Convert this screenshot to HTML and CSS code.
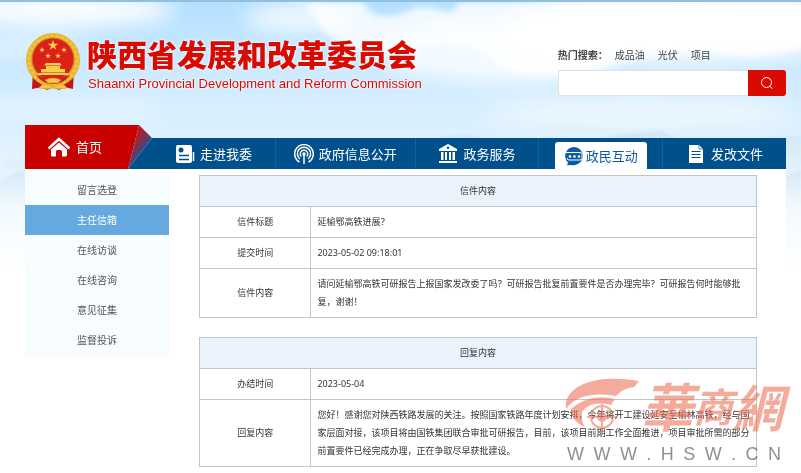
FILE: index.html
```html
<!DOCTYPE html>
<html lang="zh-CN">
<head>
<meta charset="utf-8">
<meta name="viewport" content="width=device-width, initial-scale=1">
<title>陕西省发展和改革委员会</title>
<link rel="stylesheet" href="styles.css">
</head>
<body>
<svg class="sky" viewBox="0 0 801 280" preserveAspectRatio="none" aria-hidden="true">
  <defs>
    <linearGradient id="air" x1="0" y1="0" x2="0" y2="1">
      <stop offset="0" stop-color="#b4e0ff"/><stop offset=".25" stop-color="#cdeaff"/><stop offset=".5" stop-color="#dff2fe"/><stop offset=".75" stop-color="#f4faff"/><stop offset=".95" stop-color="#fff"/>
    </linearGradient>
    <linearGradient id="hill" x1="0" y1="0" x2="0" y2="1">
      <stop offset="0" stop-color="#bfdcf1" stop-opacity=".5"/><stop offset="1" stop-color="#fff" stop-opacity="0"/>
    </linearGradient>
    <filter id="soft" x="-30%" y="-50%" width="160%" height="200%"><feGaussianBlur stdDeviation="10"/></filter>
    <filter id="edge" x="-10%" y="-20%" width="120%" height="140%"><feGaussianBlur stdDeviation="3"/></filter>
    <filter id="mist" x="-10%" y="-20%" width="120%" height="140%"><feGaussianBlur stdDeviation="1"/></filter>
  </defs>
  <rect width="801" height="280" fill="url(#air)"/>
  <g fill="#fff" filter="url(#soft)">
    <ellipse cx="60" cy="8" rx="115" ry="17" opacity=".95"/>
    <ellipse cx="20" cy="45" rx="70" ry="10" opacity=".5"/>
    <ellipse cx="300" cy="16" rx="55" ry="14" opacity=".8"/>
    <ellipse cx="60" cy="106" rx="110" ry="8" opacity=".5"/>
    <ellipse cx="500" cy="50" rx="120" ry="30" opacity=".8"/>
    <ellipse cx="690" cy="25" rx="190" ry="34" opacity=".95"/>
    <ellipse cx="640" cy="110" rx="160" ry="16" opacity=".5"/>
  </g>
  <path filter="url(#edge)" fill="#fff" opacity=".8" d="M290 0h74q6 14 20 14t26-6 30 0 16-8h360v40q-50 20-90 12t-120 14-110-6-90-12-90-30-26-18z"/>
  <g filter="url(#mist)">
    <path fill="url(#hill)" d="M0 162l10-6 14 3 22-14 26-8 30 6 26 5 36-3 30-7 25 6 26-2 20-6 20 8 60 4 60-3 35-10 25-3 30 6 45 5 40-2 35-8 45-4 30 12 25 4 35-9 51-2v90H0z"/>
    <path fill="url(#hill)" d="M0 178l18-8 20 2 30-8h660l30 6 22 6 21-8v60H0z"/>
  </g>
</svg>

<div class="page">
  <header class="masthead">
    <a class="brand" href="#">
      <svg class="emblem" viewBox="0 0 56 60" aria-hidden="true">
        <path d="M8 38L7 57l10-2 5 3 6-3 6 3 5-3 9 2 1-19z" fill="#c41418"/>
        <circle cx="28" cy="28" r="27" fill="#e9b52f"/>
        <circle cx="28" cy="28" r="24" fill="none" stroke="#f0c548" stroke-width="3" stroke-dasharray="3 2"/>
        <circle cx="28" cy="27" r="21" fill="#dc2119" stroke="#b98a20"/>
        <path d="M28 8l1.300 3.700h4L30 14l1.200 3.800L28 15.500l-3.200 2.300L26 14l-3.300-2.300h4z" fill="#f8cf4b"/>
        <g fill="#f8cf4b">
          <path d="M17 15l.8 2h2l-1.600 1.300.6 2-1.800-1.200-1.800 1.200.6-2-1.600-1.300h2zM39 15l.8 2h2l-1.600 1.300.6 2-1.800-1.200-1.800 1.200.6-2-1.600-1.300h2zM23 21l.8 2h2l-1.600 1.300.6 2-1.800-1.200-1.800 1.200.6-2-1.600-1.300h2zM33 21l.8 2h2l-1.600 1.300.6 2-1.800-1.200-1.800 1.200.6-2-1.600-1.300h2z"/>
          <path d="M21 31h14l2 2.500H19zM21 34h14v3H21zM16 37h24v3.500H16zM13 41h30v2H13z"/>
        </g>
        <path d="M11 43q17 6 34 0-6 9-17 9t-17-9z" fill="#d41f1a"/>
        <path d="M20 48q8-4 16 0l-3 3H23zM14 56q4-6 10-3l4 2 4-2q6-3 10 3l-8 1-6-1-6 1z" fill="#f3c544" stroke="#d39a1f" stroke-width=".6"/>
      </svg>
      <span class="names">
        <strong class="name-zh">陕西省发展和改革委员会</strong>
        <span class="name-en">Shaanxi Provincial Development and Reform Commission</span>
      </span>
    </a>
    <form class="search" role="search">
      <div class="hot"><b>热门搜索：</b><a href="#">成品油</a><a href="#">光伏</a><a href="#">项目</a></div>
      <div class="field">
        <input type="search" aria-label="搜索">
        <button type="button" aria-label="搜索">
          <svg viewBox="0 0 14 14" aria-hidden="true"><circle cx="6.500" cy="6.500" r="5" /><path d="M10 10.500l2.500 2"/></svg>
        </button>
      </div>
    </form>
  </header>

  <nav class="mainnav">
    <a class="home" href="#">
      <svg class="home-icon" viewBox="0 0 24 20" aria-hidden="true"><path d="M1.500 11.500L12 2l10.500 9.500" fill="none" stroke="#fff" stroke-width="2.600"/><path d="M4 12.500l8-7 8 7V18q0 1.500-1.500 1.500H15v-5q0-1.500-1.500-1.500h-3Q9 13 9 14.500v5H5.500Q4 19.500 4 18z" fill="#fff"/></svg>
      首页
    </a>
    <svg class="fold" viewBox="0 0 24 44" aria-hidden="true">
      <defs><linearGradient id="foldfill" gradientUnits="userSpaceOnUse" x1="6" y1="14" x2="18" y2="24"><stop offset="0" stop-color="#b81c2a"/><stop offset="1" stop-color="#2c4f88"/></linearGradient></defs>
      <path d="M0 0h11L0 44z" fill="#c90000"/><path d="M24 13v31H0z" fill="#00508c"/><path d="M11 0l13 13L0 44z" fill="url(#foldfill)"/>
    </svg>
    <ul class="tabs">
      <li><a href="#"><svg viewBox="0 0 20 20" aria-hidden="true"><rect x="1" y="1" width="16" height="18" rx="2" fill="#fff"/><path d="M18.500 8v9" stroke="#fff" stroke-width="1.500"/><circle cx="6" cy="6" r="2.500" fill="#00508c"/><path d="M4 11.500h10M4 15.500h10" stroke="#00508c" stroke-width="1.500"/></svg>走进我委</a></li>
      <li class="wide"><a href="#"><svg viewBox="0 0 20 20" aria-hidden="true"><g fill="none" stroke="#fff" stroke-width="1.500"><path d="M5.500 18a9.300 9.300 0 1 1 9 0"/><path d="M6 15a6.600 6.600 0 1 1 8 0"/><path d="M7.300 12.500a3.700 3.700 0 1 1 5.400 0"/><path d="M10 10v10"/></g><circle cx="10" cy="10" r="1.700" fill="#fff"/></svg>政府信息公开</a></li>
      <li><a href="#"><svg viewBox="0 0 20 20" aria-hidden="true"><path fill="#fff" fill-rule="evenodd" d="M10 0l9 5v2H1V5zM10 2.500a1.300 1.300 0 1 0 0 2.600 1.300 1.300 0 0 0 0-2.600zM3 8h2.500v8H3zM7 8h2v8H7zM11 8h2v8h-2zM14.500 8H17v8h-2.500zM1 17h18v2H1z"/></svg>政务服务</a></li>
      <li><a class="current" href="#"><svg viewBox="0 0 20 20" aria-hidden="true"><path fill="#0c5bab" d="M10 1a9 9 0 0 1 4 17q-4 2-8 1l-3 .5 1-3A9 9 0 0 1 10 1z"/><path d="M2 6.500h14q2 0 2 2V12q0 2-2 2H5q-2 0-2-2" fill="none" stroke="#fff"/><g fill="#fff"><circle cx="6" cy="10.500" r="1.300"/><circle cx="10.500" cy="10.500" r="1.300"/><circle cx="15" cy="10.500" r="1.300"/></g></svg>政民互动</a></li>
      <li><a href="#"><svg viewBox="0 0 20 20" aria-hidden="true"><path d="M3 1h10l4 4v14H3z" fill="#fff"/><path d="M13 1v4h4" fill="none" stroke="#00508c" stroke-width=".7"/><path d="M5.500 7.500h9M5.500 10.500h9M5.500 13.500h9" stroke="#00508c"/></svg>发改文件</a></li>
    </ul>
  </nav>

  <div class="body">
    <aside>
      <ul class="side">
        <li><a href="#">留言选登</a></li>
        <li><a class="active" href="#">主任信箱</a></li>
        <li><a href="#">在线访谈</a></li>
        <li><a href="#">在线咨询</a></li>
        <li><a href="#">意见征集</a></li>
        <li><a href="#">监督投诉</a></li>
      </ul>
    </aside>
    <main>
      <table>
        <colgroup><col class="label"><col></colgroup>
        <thead><tr><th colspan="2">信件内容</th></tr></thead>
        <tbody>
          <tr><th scope="row">信件标题</th><td>延榆鄂高铁进展？</td></tr>
          <tr><th scope="row">提交时间</th><td>2023-05-02 09:18:01</td></tr>
          <tr><th scope="row">信件内容</th><td>请问延榆鄂高铁可研报告上报国家发改委了吗？可研报告批复前置要件是否办理完毕？可研报告何时能够批<br>复，谢谢！</td></tr>
        </tbody>
      </table>
      <div class="reply">
        <table>
          <colgroup><col class="label"><col></colgroup>
          <thead><tr><th colspan="2">回复内容</th></tr></thead>
          <tbody>
            <tr><th scope="row">办结时间</th><td>2023-05-04</td></tr>
            <tr><th scope="row">回复内容</th><td>您好！感谢您对陕西铁路发展的关注。按照国家铁路年度计划安排，今年将开工建设延安至榆林高铁，经与国家层面对接，该项目将由国铁集团联合审批可研报告，目前，该项目前期工作全面推进，项目审批所需的部分前置要件已经完成办理，正在争取尽早获批建设。</td></tr>
          </tbody>
        </table>
        <div class="watermark">
          <div class="mark">
            <svg viewBox="0 0 76 58" aria-hidden="true">
              <path d="M1 33C-2 10 30-3 74 5L69 11Q58 12 51 20Q15 14 1 33z"/>
              <path d="M6 33Q24 17 50 23L46 29Q25 24 17 36Q16 46 20 51Q6 45 6 33z"/>
              <circle cx="37" cy="41" r="11" fill="none" stroke="#f0745a" stroke-width="2"/>
              <circle cx="37" cy="41" r="5"/>
              <path d="M36 28h2v28h-2zM22 40h30v2H22z"/>
            </svg>
            <span class="hua">華</span><span class="shang">商</span><span class="wang">網</span>
          </div>
          <div class="site"><span>W</span><span>W</span><span>W</span><span>.</span><span>H</span><span>S</span><span>W</span><span>.</span><span>C</span><span>N</span></div>
        </div>
      </div>
    </main>
  </div>
</div>
</body>
</html>
```
FILE: styles.css
```css
* { box-sizing: border-box; }

body {
  margin: 0;
  border-top: 2px solid #90bfe2;
  background: #fff;
  color: #333;
  font: 9px/18px "Noto Sans", "Noto Sans CJK SC", sans-serif;
}

a { color: inherit; text-decoration: none; }
ul { list-style: none; margin: 0; padding: 0; }

.sky {
  position: absolute;
  top: 2px;
  left: 0;
  z-index: -1;
  width: 100%;
  height: 280px;
}

.page { margin: 0 15px 0 25px; }

.masthead {
  display: flex;
  justify-content: space-between;
  padding-top: 30px;
  height: 123px;
}

.brand { display: flex; align-items: flex-start; gap: 6px; }
.emblem { width: 56px; height: 60px; }
.names { display: flex; flex-direction: column; gap: 4px; padding-top: 2px; color: #d90b00; white-space: nowrap; }
.name-zh {
  font: 900 30px/38px "Noto Sans CJK SC", sans-serif;
  text-shadow: 0 0 2px #fff, 0 0 3px #fff;
}
.name-en {
  padding-left: 1px;
  font: 13px/16px "Liberation Sans", sans-serif;
  text-shadow: 0 0 2px #fff, 0 0 2px #fff;
}

.search { width: 30%; padding-top: 14px; }
.hot { display: flex; gap: 13px; font-size: 10px; color: #444; }
.hot b { margin-right: -6px; }
.field { display: flex; margin-top: 6px; height: 26px; }
.field input {
  flex: 1;
  min-width: 0;
  border: 1px solid #e2e2e2;
  border-right: 0;
  border-radius: 3px 0 0 3px;
  background: #fff;
  outline: 0;
}
.field button {
  display: flex;
  align-items: center;
  justify-content: center;
  width: 38px;
  padding: 0;
  border: 0;
  border-radius: 0 3px 3px 0;
  background: #d90b00;
}
.field svg { width: 14px; height: 14px; fill: none; stroke: #fff; }

.mainnav { display: flex; align-items: flex-end; height: 44px; font-size: 13px; color: #fff; }
.home {
  display: flex;
  align-items: center;
  gap: 5px;
  width: 103px;
  height: 44px;
  padding-left: 22px;
  background: #c90000;
}
.home-icon { width: 24px; height: 20px; }
.fold { width: 24px; height: 44px; }
.tabs { flex: 1; display: flex; height: 31px; background: #00508c; }
.tabs li {
  flex: 124;
  display: flex;
  justify-content: center;
  align-items: flex-end;
  border-right: 1px solid #0c62a4;
}
.tabs li:last-child { border-right: 0; }
.tabs .wide { flex: 140; }
.tabs a { display: flex; align-items: center; gap: 5px; height: 31px; white-space: nowrap; }
.tabs svg { width: 20px; height: 20px; }
.tabs .current {
  gap: 2px;
  height: 27px;
  padding: 0 9px;
  border-radius: 3px 3px 0 0;
  background: #fff;
  color: #0c5bab;
}

.body {
  display: flex;
  gap: 30px;
  padding: 6px 29px 0 0;
  background: #fff;
}

aside { flex: none; width: 144px; }
.side { padding-bottom: 2px; background: #f7fcff; font-size: 10px; text-align: center; color: #555; }
.side a { display: block; line-height: 30px; }
.side .active { background: #65a9e0; color: #fff; }

main { flex: 1; min-width: 0; }
table { width: 100%; border-collapse: collapse; table-layout: fixed; }
.label { width: 20%; }
th, td { border: 1px solid #c3c5c7; padding: 6px; font-weight: 400; }
td { background: #fff; }
thead th { background: #eaf3fb; }

.reply { position: relative; margin-top: 19px; }

.watermark {
  position: absolute;
  top: 31px;
  right: -26px;
  width: 218px;
  opacity: .6;
  color: #f0745a;
  pointer-events: none;
}
.mark { display: flex; align-items: center; height: 74px; font-family: "Noto Sans CJK TC", sans-serif; font-style: italic; font-weight: 700; }
.mark svg { flex: none; width: 76px; height: 58px; fill: #f0745a; }
.hua { font-size: 52px; line-height: 74px; }
.shang { font-size: 40px; line-height: 74px; }
.wang { font-size: 50px; line-height: 74px; }
.site {
  display: flex;
  justify-content: space-between;
  padding: 2px 2px 0;
  font: 18px/20px "Liberation Sans", sans-serif;
  color: #444;
}
```
